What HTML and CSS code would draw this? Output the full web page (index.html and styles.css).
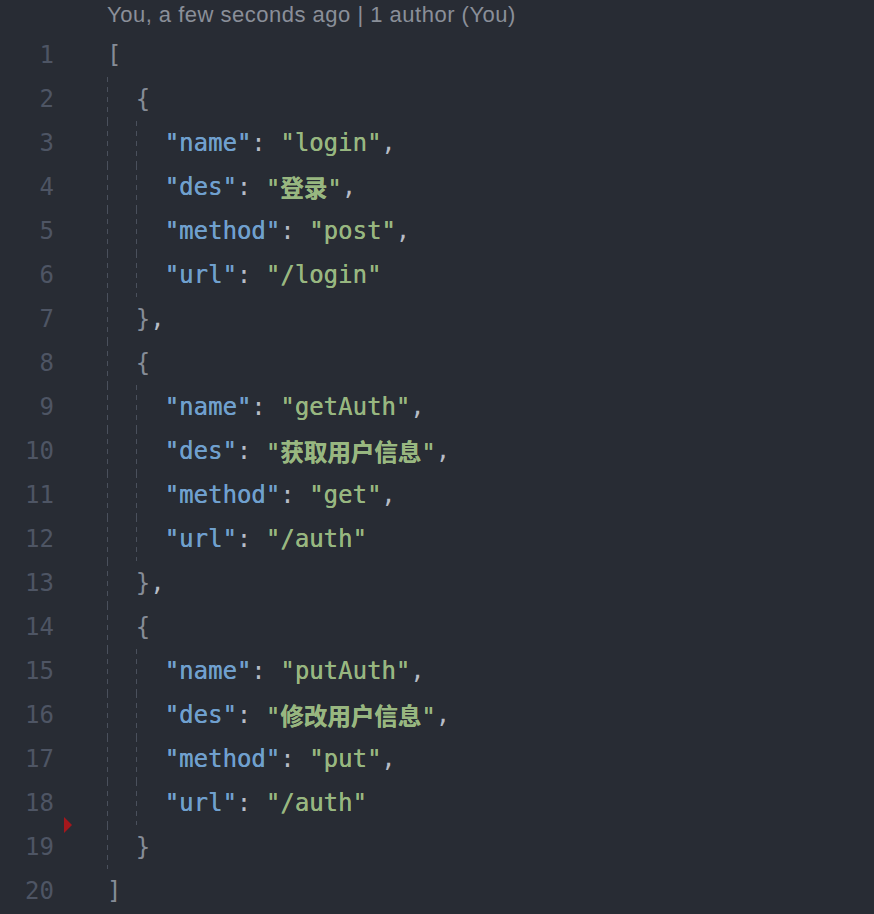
FILE: index.html
```html
<!DOCTYPE html>
<html>
<head>
<meta charset="utf-8">
<link rel="stylesheet" href="styles.css">
</head>
<body>
<div class="editor">
  <div class="blame">You, a few seconds ago | 1 author (You)</div>
  <div class="lines">
    <div class="line"><span class="ln">1</span><div class="code"><span class="br">[</span></div></div>
    <div class="line"><span class="ln">2</span><div class="code"><span class="ind"></span><span class="br">{</span></div></div>
    <div class="line"><span class="ln">3</span><div class="code"><span class="ind"></span><span class="ind"></span><span class="k">"name"</span><span class="p">: </span><span class="s">"login"</span><span class="p">,</span></div></div>
    <div class="line"><span class="ln">4</span><div class="code"><span class="ind"></span><span class="ind"></span><span class="k">"des"</span><span class="p">: </span><span class="s">"<b class="cjk">登录</b>"</span><span class="p">,</span></div></div>
    <div class="line"><span class="ln">5</span><div class="code"><span class="ind"></span><span class="ind"></span><span class="k">"method"</span><span class="p">: </span><span class="s">"post"</span><span class="p">,</span></div></div>
    <div class="line"><span class="ln">6</span><div class="code"><span class="ind"></span><span class="ind"></span><span class="k">"url"</span><span class="p">: </span><span class="s">"/login"</span></div></div>
    <div class="line"><span class="ln">7</span><div class="code"><span class="ind"></span><span class="br">}</span><span class="p">,</span></div></div>
    <div class="line"><span class="ln">8</span><div class="code"><span class="ind"></span><span class="br">{</span></div></div>
    <div class="line"><span class="ln">9</span><div class="code"><span class="ind"></span><span class="ind"></span><span class="k">"name"</span><span class="p">: </span><span class="s">"getAuth"</span><span class="p">,</span></div></div>
    <div class="line"><span class="ln">10</span><div class="code"><span class="ind"></span><span class="ind"></span><span class="k">"des"</span><span class="p">: </span><span class="s">"<b class="cjk">获取用户信息</b>"</span><span class="p">,</span></div></div>
    <div class="line"><span class="ln">11</span><div class="code"><span class="ind"></span><span class="ind"></span><span class="k">"method"</span><span class="p">: </span><span class="s">"get"</span><span class="p">,</span></div></div>
    <div class="line"><span class="ln">12</span><div class="code"><span class="ind"></span><span class="ind"></span><span class="k">"url"</span><span class="p">: </span><span class="s">"/auth"</span></div></div>
    <div class="line"><span class="ln">13</span><div class="code"><span class="ind"></span><span class="br">}</span><span class="p">,</span></div></div>
    <div class="line"><span class="ln">14</span><div class="code"><span class="ind"></span><span class="br">{</span></div></div>
    <div class="line"><span class="ln">15</span><div class="code"><span class="ind"></span><span class="ind"></span><span class="k">"name"</span><span class="p">: </span><span class="s">"putAuth"</span><span class="p">,</span></div></div>
    <div class="line"><span class="ln">16</span><div class="code"><span class="ind"></span><span class="ind"></span><span class="k">"des"</span><span class="p">: </span><span class="s">"<b class="cjk">修改用户信息</b>"</span><span class="p">,</span></div></div>
    <div class="line"><span class="ln">17</span><div class="code"><span class="ind"></span><span class="ind"></span><span class="k">"method"</span><span class="p">: </span><span class="s">"put"</span><span class="p">,</span></div></div>
    <div class="line marked"><span class="ln">18</span><div class="code"><span class="ind"></span><span class="ind"></span><span class="k">"url"</span><span class="p">: </span><span class="s">"/auth"</span></div><span class="marker"></span></div>
    <div class="line"><span class="ln">19</span><div class="code"><span class="ind"></span><span class="br">}</span></div></div>
    <div class="line"><span class="ln">20</span><div class="code"><span class="br">]</span></div></div>
  </div>
</div>
</body>
</html>
```

FILE: styles.css
```css
html, body {
  margin: 0;
  padding: 0;
  background: #282c34;
}
.editor {
  width: 874px;
  height: 914px;
  background: #282c34;
  overflow: hidden;
}
.blame {
  height: 33px;
  padding-left: 107px;
  font-family: "Liberation Sans", Arial, sans-serif;
  font-size: 22px;
  letter-spacing: 0.5px;
  line-height: 30px;
  color: #8a8f99;
}
.lines {
  display: flex;
  flex-direction: column;
}
.line {
  position: relative;
  display: flex;
  height: 44px;
  align-items: center;
  font-family: "DejaVu Sans Mono", "Liberation Mono", monospace;
  font-size: 24px;
  white-space: pre;
}
.ln {
  width: 54px;
  text-align: right;
  color: #4e5564;
  flex: none;
}
.code {
  margin-left: 53px;
  display: flex;
  align-items: center;
  height: 44px;
}
.ind {
  display: inline-block;
  width: 28.8px;
  height: 44px;
  flex: none;
  background: repeating-linear-gradient(to bottom, #4a505c 0 5px, transparent 5px 10px) left top / 1px 100% no-repeat;
}
.br { color: #868c97; }
.p { color: #b7bcc6; }
.k { color: #70a0ce; text-shadow: 0.3px 0 0 currentColor; }
.s { color: #98b780; text-shadow: 0.3px 0 0 currentColor; }
.cjk {
  font-family: "Noto Sans CJK SC", sans-serif;
  font-weight: 700;
  font-size: 23.5px;
}
.marker {
  position: absolute;
  left: 64px;
  top: 36px;
  width: 0;
  height: 0;
  border-top: 8px solid transparent;
  border-bottom: 8px solid transparent;
  border-left: 8px solid #a4171c;
}
```
